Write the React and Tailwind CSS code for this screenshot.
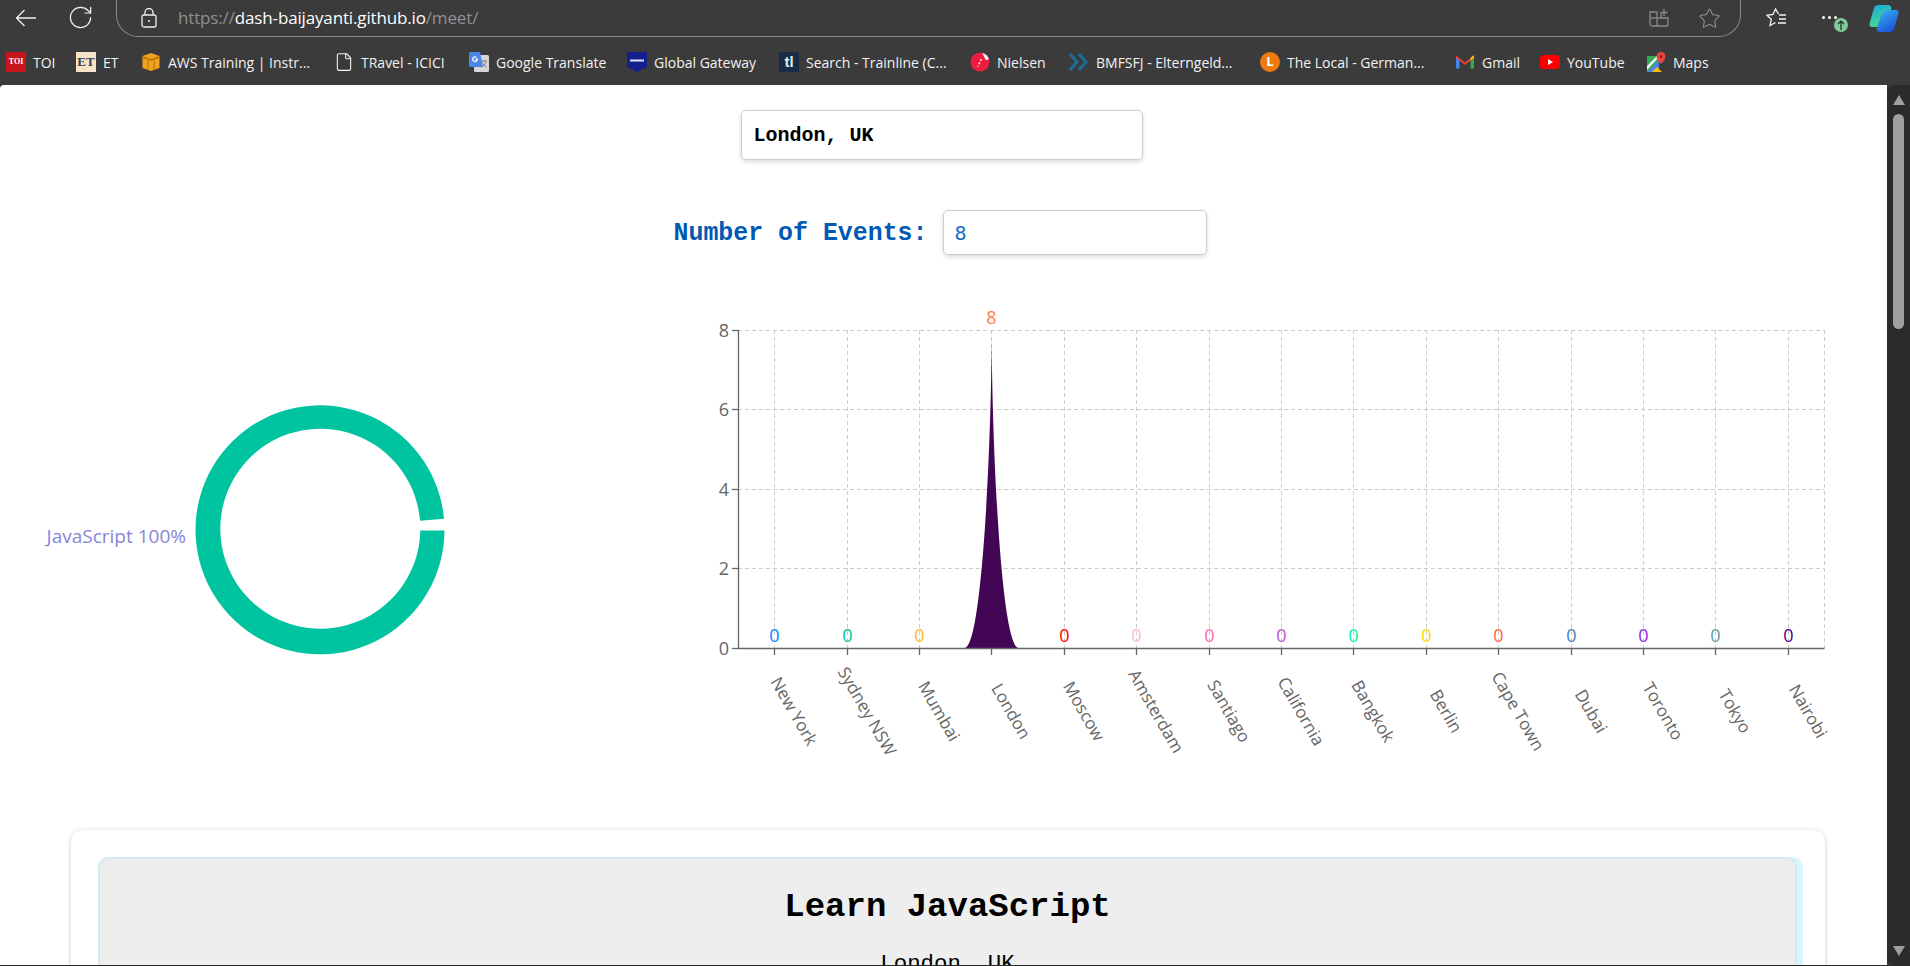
import { RotateCw, Star, File } from "lucide-react";

const uiFont = "font-['Open_Sans','Noto_Sans',sans-serif]";
const monoFont = "font-['Liberation_Mono','Courier_New',monospace]";

const TOI = () => (
  <div className="w-5 h-5 bg-[#c8141c] text-white text-[8px] font-bold flex items-center justify-center font-['Liberation_Serif',serif]">TOI</div>
);
const ET = () => (
  <div className="w-5 h-5 bg-[#f6e3c8] text-[#31424f] text-[13px] font-bold flex items-center justify-center font-['Liberation_Serif',serif]">ET</div>
);
const Aws = () => (
  <svg width="20" height="20" viewBox="0 0 20 20">
    <path d="M10 1 18.5 4v12L10 19 1.500 16V4z" fill="#f0a11f" />
    <path d="M1.500 4 10 7l8.500-3v2L10 9 1.500 6z" fill="#b97508" />
    <path d="M6 6h1.500v12H6zM12.500 6H14v12h-1.500z" fill="#c9830f" />
  </svg>
);
const Doc = () => <File size={20} strokeWidth={1.3} color="#f2f2f2" />;
const Translate = () => (
  <svg width="20" height="20" viewBox="0 0 20 20">
    <rect x="5" y="3" width="15" height="17" rx="1.500" fill="#d4d6d8" />
    <path d="M1.500 0H11l3 15H1.500A1.500 1.500 0 0 1 0 13.500V1.500A1.500 1.500 0 0 1 1.500 0z" fill="#4a86e8" />
    <path d="M9 6.500H6.300v1.300h1.300a1.700 1.700 0 1 1-.5-2l.9-.9A3 3 0 1 0 9 7.500z" fill="#fff" />
    <path d="M12 9h6M15 8v2M13 15c2.500-1.200 3.500-3 4-5M13.500 10.500c.8 2 2.200 3.500 4 4.500" stroke="#77808a" fill="none" />
  </svg>
);
const Zeiss = () => (
  <svg width="20" height="20" viewBox="0 0 20 20">
    <path d="M0 0h20v15L10 20 0 15z" fill="#141e8c" />
    <path d="M3 7.500h14v2H3z" fill="#dfe3f2" />
  </svg>
);
const Trainline = () => (
  <div className="w-5 h-5 bg-[#1a2b47] text-[#d8f0ea] text-[15px] font-bold flex items-center justify-center font-['Liberation_Sans',sans-serif]">tl</div>
);
const Nielsen = () => (
  <svg width="21" height="20" viewBox="0 0 21 20">
    <circle cx="10.500" cy="10" r="10" fill="#ec1c3e" />
    <path d="M13 .5a10 10 0 0 1 7 6.500l-3.500 1z" fill="#f5f5f5" />
    <path d="M12 7 8 15" stroke="#fff" strokeWidth="1.500" strokeDasharray="2 2" />
  </svg>
);
const Chevrons = () => (
  <svg width="20" height="20" viewBox="0 0 20 20" fill="none" stroke="#1c6f9c" strokeWidth="3">
    <path d="M1 2l7 8-7 8M10 2l7 8-7 8" />
  </svg>
);
const TheLocal = () => (
  <div className="w-5 h-5 rounded-full bg-[#ee7b0e] text-white text-[13px] font-bold flex items-center justify-center">L</div>
);
const Gmail = () => (
  <svg width="20" height="20" viewBox="0 0 20 20">
    <path d="M1 5v11.500h3.500V8z" fill="#4285f4" />
    <path d="M15.500 8v8.500H19V5z" fill="#34a853" />
    <path d="M1 3.500 10 10.500l9-7V6l-9 7-9-7z" fill="#ea4335" />
    <path d="M15.500 5.700 19 3v3l-3.500 2.500z" fill="#fbbc04" />
  </svg>
);
const YouTube = () => (
  <svg width="20" height="20" viewBox="0 0 20 20">
    <rect x="0" y="3" width="20" height="14" rx="4" fill="#f00" />
    <path d="M8 7l5 3-5 3z" fill="#fff" />
  </svg>
);
const Maps = () => (
  <svg width="20" height="20" viewBox="0 0 20 20">
    <path d="M1 4h12v16H1z" fill="#35a853" />
    <path d="M1 20 13 8v12z" fill="#4a86e8" />
    <path d="M1 14 11 4h3L1 18z" fill="#f4f4f4" />
    <path d="M6 20l5-5 5 5z" fill="#fbbc04" />
    <path d="M15 0a4.500 4.500 0 0 1 4.500 4.500C19.500 8 15 12 15 12s-4.500-4-4.500-7.500A4.500 4.500 0 0 1 15 0z" fill="#e8453c" />
    <circle cx="15" cy="4.500" r="1.500" fill="#8c1f18" />
  </svg>
);

const bookmarks = [
  { label: "TOI", icon: <TOI />, width: "w-[70px]" },
  { label: "ET", icon: <ET />, width: "w-[65px]" },
  { label: "AWS Training | Instr...", icon: <Aws />, width: "w-[193px]" },
  { label: "TRavel - ICICI", icon: <Doc />, width: "w-[135px]" },
  { label: "Google Translate", icon: <Translate />, width: "w-[158px]" },
  { label: "Global Gateway", icon: <Zeiss />, width: "w-[152px]" },
  { label: "Search - Trainline (C...", icon: <Trainline />, width: "w-[191px]" },
  { label: "Nielsen", icon: <Nielsen />, width: "w-[99px]" },
  { label: "BMFSFJ - Elterngeld...", icon: <Chevrons />, width: "w-[191px]" },
  { label: "The Local - German...", icon: <TheLocal />, width: "w-[195px]" },
  { label: "Gmail", icon: <Gmail />, width: "w-[85px]" },
  { label: "YouTube", icon: <YouTube />, width: "w-[106px]" },
  { label: "Maps", icon: <Maps />, width: "w-[100px]" },
];

const cities = [
  { name: "New York", color: "#0088FE" },
  { name: "Sydney NSW", color: "#00C49F" },
  { name: "Mumbai", color: "#FFBB28" },
  { name: "London", color: "#FF8042", count: 8 },
  { name: "Moscow", color: "#FF0000" },
  { name: "Amsterdam", color: "#FFC0CB" },
  { name: "Santiago", color: "#FF69B4" },
  { name: "California", color: "#BA55D3" },
  { name: "Bangkok", color: "#00FA9A" },
  { name: "Berlin", color: "#FFD700" },
  { name: "Cape Town", color: "#FF6347" },
  { name: "Dubai", color: "#4682B4" },
  { name: "Toronto", color: "#8A2BE2" },
  { name: "Tokyo", color: "#5F9EA0" },
  { name: "Nairobi", color: "#4B0082" },
];

const yTicks = [
  { label: 8, y: 330.5 },
  { label: 6, y: 409.5 },
  { label: 4, y: 489.5 },
  { label: 2, y: 568.5 },
  { label: 0, y: 648.5 },
];

const tickX = (i) => Math.floor(774.7 + i * 72.4) + 0.5;

const EventsChart = () => (
  <svg width="1160" height="500" viewBox="690 300 1160 500" className="ml-[130px] shrink-0">
    <g stroke="#ccc" strokeDasharray="4 3" fill="none">
      {yTicks.slice(0, 4).map((t) => (
        <line key={t.label} x1="738" x2="1824.500" y1={t.y} y2={t.y} />
      ))}
      {cities.map((c, i) => (
        <line key={c.name} x1={tickX(i)} x2={tickX(i)} y1="330" y2="648" />
      ))}
      <line x1="1824.500" x2="1824.500" y1="330" y2="648" />
    </g>
    <path d="M964.500 648C982.500 648 991.700 436 991.700 330C991.700 436 1000.700 648 1018.800 648Z" fill="#430654" />
    <g stroke="#666" fill="none" strokeWidth="1.300">
      <line x1="738.500" x2="738.500" y1="330" y2="648.500" />
      <line x1="738" x2="1824.500" y1="648.500" y2="648.500" />
      {yTicks.map((t) => (
        <line key={t.label} x1="732" x2="738" y1={t.y} y2={t.y} />
      ))}
      {cities.map((c, i) => (
        <line key={c.name} x1={tickX(i)} x2={tickX(i)} y1="648" y2="655" />
      ))}
    </g>
    <g fontFamily="Open Sans, Noto Sans, sans-serif" fontSize="18">
      {yTicks.map((t) => (
        <text key={t.label} x="729" y={t.y + 6} textAnchor="end" fill="#666">
          {t.label}
        </text>
      ))}
      {cities.map((c, i) => (
        <text key={c.name} x={tickX(i)} y={c.count ? 324 : 642} textAnchor="middle" fill={c.color}>
          {c.count || 0}
        </text>
      ))}
      {cities.map((c, i) => (
        <text
          key={c.name}
          x={tickX(i) + 20}
          y="711"
          fontSize="17"
          textAnchor="middle"
          dominantBaseline="central"
          fill="#666"
          transform={`rotate(60 ${tickX(i) + 20} 711)`}
        >
          {c.name}
        </text>
      ))}
    </g>
  </svg>
);

const LanguageDonut = () => (
  <svg width="560" height="500" viewBox="0 300 560 500" className="shrink-0">
    <path
      d="M444.500 530.500A124.500 124.500 0 1 1 444 518.700L420 520.800A100 100 0 1 0 420.300 530.500Z"
      fill="#00C49F"
    />
    <text x="186" y="543" textAnchor="end" fill="#8884d8" fontSize="19" fontFamily="Open Sans, Noto Sans, sans-serif">
      JavaScript 100%
    </text>
  </svg>
);

const Toolbar = () => (
  <div className="h-[46px] flex items-start shrink-0 text-[#f0f0f0]">
    <div className="w-[116px] h-[35px] flex items-center pl-[15px] gap-[30px]">
      <svg width="22" height="18" viewBox="0 0 22 18" fill="none" stroke="currentColor" strokeWidth="1.300">
        <path d="M21 9H1.500M9.500 1 1.500 9l8 8" />
      </svg>
      <RotateCw size={27} strokeWidth={1.1} />
    </div>
    <div className="w-[1625px] h-[37px] border border-t-0 border-[#8a8a8a] rounded-b-[22px] flex items-center pl-[24px] pr-[19px]">
      <svg width="16" height="20" viewBox="0 0 16 20" fill="none" stroke="#f0f0f0" strokeWidth="1.300">
        <rect x="1" y="7" width="14" height="12" rx="2" />
        <path d="M4 7V4.500a4 4 0 0 1 8 0V7" />
        <circle cx="8" cy="13" r="1" fill="#f0f0f0" stroke="none" />
      </svg>
      <div className={`ml-[21px] text-[17px] flex-1 tracking-[-0.15px] ${uiFont}`}>
        <span className="text-[#8f8f8f]">https://</span>
        <span className="text-white">dash-baijayanti.github.io</span>
        <span className="text-[#8f8f8f]">/meet/</span>
      </div>
      <svg width="20" height="20" viewBox="0 0 20 20" fill="none" stroke="#8a8a8a" strokeWidth="1.300">
        <path d="M1 4h7v14H3a2 2 0 0 1-2-2zM8 10h11v6a2 2 0 0 1-2 2H8M12 10V5M15 1v7M11.500 4.500h7" />
        <path d="M1 10h7" />
      </svg>
      <Star size={23} strokeWidth={1.1} color="#8f8f8f" className="ml-[29px]" />
    </div>
    <div className="flex items-center h-[35px] relative flex-1">
      <svg width="21" height="20" viewBox="0 0 21 20" fill="none" stroke="#f5f5f5" strokeWidth="1.300" className="ml-[25px]">
        <path d="M12.500 6 9.500 1 7 6.500 1 7.300l4.300 4L4 17.500l5.500-3" />
        <path d="M13 7h7M13 11h7M12 15h8" />
      </svg>
      <div className="absolute left-[81px] top-[16px] flex gap-[3px]">
        <div className="w-[3px] h-[3px] rounded-full bg-white" />
        <div className="w-[3px] h-[3px] rounded-full bg-white" />
        <div className="w-[3px] h-[3px] rounded-full bg-white" />
      </div>
      <div className="absolute left-[93px] top-[18px] w-[14px] h-[14px] rounded-full bg-[#7fc99a] flex items-center justify-center">
        <svg width="8" height="10" viewBox="0 0 8 10" fill="none" stroke="#1d2b22" strokeWidth="1.200">
          <path d="M4 10V1M1 4l3-3 3 3" />
        </svg>
      </div>
      <svg width="30" height="27" viewBox="0 0 30 27" className="absolute left-[128px] top-[5px]">
        <defs>
          <linearGradient id="copilotLeft" x1="0" y1="0" x2="0.4" y2="1">
            <stop offset="0" stopColor="#18a5e0" />
            <stop offset="1" stopColor="#48d98a" />
          </linearGradient>
          <linearGradient id="copilotRight" x1="0" y1="0" x2="0.6" y2="1">
            <stop offset="0" stopColor="#38b8f2" />
            <stop offset="1" stopColor="#1c52d8" />
          </linearGradient>
        </defs>
        <path d="M9 0h10c2 0 3 1 3.500 3L19 14l-6 8H3c-2 0-3-1.500-2.500-3.500L5 3C5.500 1 7 0 9 0z" fill="url(#copilotLeft)" />
        <path d="M21 27H11c-2 0-3-1-3.500-3L11 14c1-3 3-8 8-9h8c2 0 3 1.500 2.500 3.500L25 24c-.5 2-2 3-4 3z" fill="url(#copilotRight)" />
      </svg>
    </div>
  </div>
);

const BookmarksBar = () => (
  <div className={`h-[39px] pl-[6px] pb-[7px] flex items-center shrink-0 text-[14px] text-[#f2f2f2] ${uiFont}`}>
    {bookmarks.map((b) => (
      <div key={b.label} className={`${b.width} flex items-center gap-[7px] shrink-0`}>
        <div className="w-5 flex justify-center shrink-0">{b.icon}</div>
        <span className="whitespace-nowrap">{b.label}</span>
      </div>
    ))}
  </div>
);

const Scrollbar = () => (
  <div className="w-[23px] bg-[#2b2b2b] rounded-tl-[6px] rounded-bl-[6px] flex flex-col items-center pt-[10px] pb-[9px] shrink-0">
    <div className="w-0 h-0 border-x-[6px] border-x-transparent border-b-[10px] border-b-[#9f9f9f]" />
    <div className="w-[11px] h-[215px] bg-[#9f9f9f] rounded-full mt-[9px]" />
    <div className="flex-1" />
    <div className="w-0 h-0 border-x-[6px] border-x-transparent border-t-[10px] border-t-[#9f9f9f]" />
  </div>
);

const App = () => {
  return (
    <div className="w-[1910px] h-[966px] bg-[#3b3b3b] flex flex-col overflow-hidden">
      <Toolbar />
      <BookmarksBar />
      <div className="flex-1 flex min-h-0">
        <div className="flex-1 bg-white rounded-tl-[4px] overflow-hidden">
          <div className="flex justify-center pr-[4px] pt-[25px]">
            <input
              readOnly
              value="London, UK"
              className={`w-[402px] h-[50px] border border-[#ccc] rounded-[5px] shadow-[0_2px_4px_rgba(0,0,0,0.15)] px-[12px] pt-[1px] text-[20px] font-bold text-black ${monoFont}`}
            />
          </div>
          <div className="flex justify-center items-center mt-[50px] gap-[16px] pr-[6px]">
            <label className={`text-[24.900px] font-bold text-[#0059b3] mt-[2px] ${monoFont}`}>Number of Events:</label>
            <input
              readOnly
              value="8"
              className="w-[264px] h-[45px] border border-[#ccc] rounded-[5px] shadow-[0_2px_4px_rgba(0,0,0,0.15)] px-[10px] text-[20px] text-[#1a6dc4] font-['DejaVu_Sans_Mono',monospace]"
            />
          </div>
          <div className="flex mt-[45px]">
            <LanguageDonut />
            <EventsChart />
          </div>
          <div className="ml-[71px] mt-[30px] w-[1754px] h-[200px] rounded-[12px] bg-white shadow-[0_1px_5px_rgba(0,0,0,0.22)] pt-[27px] pl-[27px]">
            <div className="w-[1699px] h-[300px] bg-[#eeeeee] border-2 border-[#d0ebf3] rounded-[10px] shadow-[6px_0_0_#dcf5fd] text-center text-black pt-[24px]">
              <h1 className={`text-[34px] font-bold leading-[48px] ${monoFont}`}>Learn JavaScript</h1>
              <p className={`text-[22.400px] leading-[30px] mt-[18px] ${monoFont}`}>London, UK</p>
            </div>
          </div>
        </div>
        <Scrollbar />
      </div>
      <div className="h-px bg-[#2b2b2b] shrink-0" />
    </div>
  );
};

export default App;
